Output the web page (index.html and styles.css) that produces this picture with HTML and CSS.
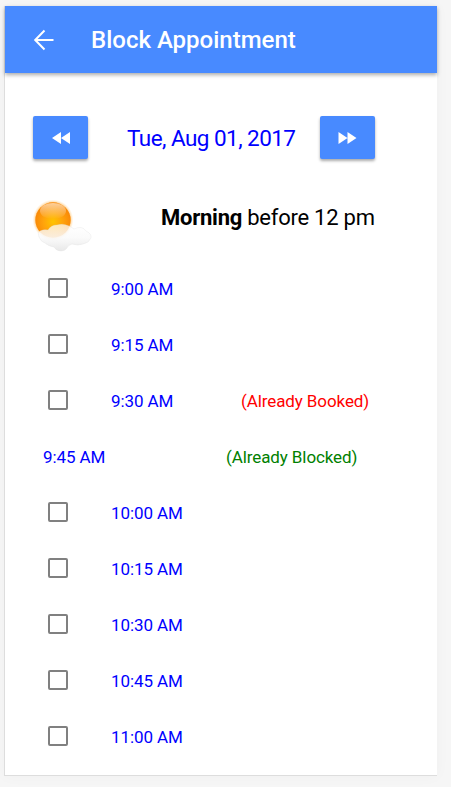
FILE: index.html
```html
<!DOCTYPE html>
<html lang="en"><head><meta charset="utf-8"><title>Block Appointment</title><link rel="stylesheet" href="styles.css"></head>
<body><main class="app">
<header class="bar"><svg class="back" viewBox="0 0 24 24"><path d="M21.500 12H3.500M12.500 2.500L3.200 12l9.300 9.500"/></svg><h1>Block Appointment</h1></header>
<nav class="days"><button aria-label="Previous day"><svg viewBox="0 0 24 24"><path d="M12 18V6l-9 6zM21 18V6l-9 6z"/></svg></button><span class="date">Tue, Aug 01, 2017</span><button aria-label="Next day"><svg viewBox="0 0 24 24"><path d="M2.500 18l9-6-9-6zM11.500 18l9-6-9-6z"/></svg></button></nav>
<section class="period">
<svg class="sun" viewBox="0 0 60 54"><defs><radialGradient id="sun" cy=".55"><stop offset="0" stop-color="#ffc400"/><stop offset=".55" stop-color="#ffa30c"/><stop offset="1" stop-color="#f98a08"/></radialGradient><radialGradient id="glow"><stop offset=".8" stop-color="#ffb95a"/><stop offset="1" stop-color="#ffe3b8" stop-opacity="0"/></radialGradient><linearGradient id="shine" x2="0" y2="1"><stop stop-color="#fff" stop-opacity=".6"/><stop offset="1" stop-color="#fff" stop-opacity="0"/></linearGradient><linearGradient id="cloud" x2="0" y2="1"><stop stop-color="#fff" stop-opacity=".7"/><stop offset=".5" stop-color="#fafafa" stop-opacity=".88"/><stop offset="1" stop-color="#e8e8e8"/></linearGradient></defs><circle cx="20" cy="21" r="20.500" fill="url(#glow)"/><circle cx="20" cy="21" r="17.700" fill="url(#sun)"/><ellipse cx="20" cy="12" rx="13" ry="8" fill="url(#shine)"/><path d="M6 38q-2-4 1-6 4-2 8-1 3-5 9-5 6-2 12 1 4 2 5 3 8-4 12 2 6 3 5 7-2 5-8 6-5 2-11 0-4 1-5 4-2 3-6 3-5 0-7-4-6-1-9-4-4-1-6-6" fill="url(#cloud)" stroke="#ddd" stroke-opacity=".5" stroke-width=".6"/></svg>
<h2><b>Morning</b> before 12 pm</h2></section>
<ul class="slots">
<li><i class="box"></i><span class="time">9:00 AM</span></li>
<li><i class="box"></i><span class="time">9:15 AM</span></li>
<li><i class="box"></i><span class="time">9:30 AM</span><span class="booked">(Already Booked)</span></li>
<li class="closed"><span class="time">9:45 AM</span><span class="blocked">(Already Blocked)</span></li>
<li><i class="box"></i><span class="time">10:00 AM</span></li>
<li><i class="box"></i><span class="time">10:15 AM</span></li>
<li><i class="box"></i><span class="time">10:30 AM</span></li>
<li><i class="box"></i><span class="time">10:45 AM</span></li>
<li><i class="box"></i><span class="time">11:00 AM</span></li>
</ul></main></body></html>
```
FILE: styles.css
```css
* { box-sizing: border-box; }
body { margin: 0; height: 787px; padding: 6px 14px 11px 4px; background: #f6f6f6; font-family: Roboto, sans-serif; overflow: hidden; }
.app { height: 770px; border: 1px solid #ddd; border-width: 0 0 1px; border-left-width: 1px; background: #fff; box-shadow: 0 0 14px #00000008; }
.bar { display: flex; align-items: center; height: 67px; padding-left: 27px; background: #488aff; color: #fff; box-shadow: 0 2px 4px #0005; }
.back { width: 24px; height: 24px; fill: none; stroke: #fff; stroke-width: 2; }
h1 { margin: 0 0 0 35px; font-size: 24px; font-weight: 500; line-height: 28px; white-space: nowrap; }
.days { display: flex; align-items: center; margin-top: 43px; padding-left: 28px; height: 43px; }
.days button { display: grid; place-items: center; width: 55px; height: 43px; padding: 0; border: 0; border-radius: 2px; background: #488aff; box-shadow: 0 2px 3px #0005; }
.days svg { width: 24px; height: 24px; fill: #fff; }
.date { width: 232px; padding-left: 39px; color: #00f; font-size: 22.500px; letter-spacing: -.55px; white-space: nowrap; }
.period { display: flex; height: 101px; padding: 40px 0 0 28px; }
.sun { width: 60px; height: 54px; }
h2 { margin: 5px 0 0 68px; font-size: 22px; letter-spacing: -.25px; line-height: 28px; font-weight: 400; color: #000; white-space: nowrap; }
.slots { list-style: none; margin: 0; padding: 0 0 0 43px; }
.slots li { display: flex; align-items: center; height: 56px; font-size: 17px; letter-spacing: -.1px; }
.slots span { padding-top: 2px; }
.box { width: 20px; height: 20px; border: 2px solid #808080; border-radius: 2px; }
.time { margin-left: 43px; width: 130px; color: #00f; }
.booked { color: #f00; }
.closed .time { margin-left: -5px; width: 183px; }
.blocked { color: #008000; }
```
